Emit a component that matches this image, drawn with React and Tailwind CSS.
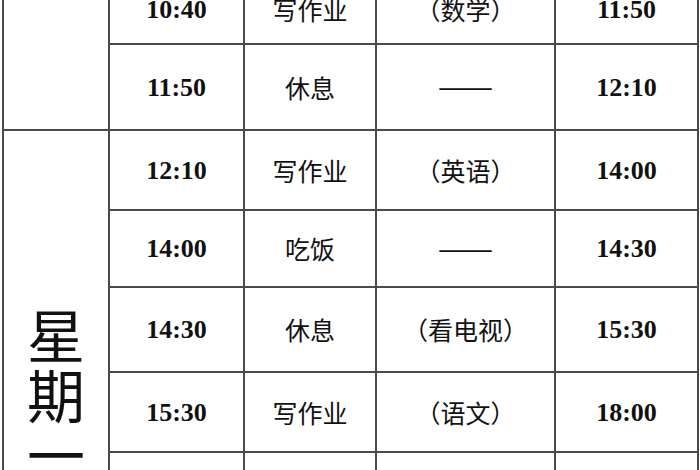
const rows = [
  { start: "10:40", task: "写作业", note: "（数学）", end: "11:50", h: "h-[70px]" },
  { start: "11:50", task: "休息", note: "——", end: "12:10", h: "h-[86px]" },
  { start: "12:10", task: "写作业", note: "（英语）", end: "14:00", h: "h-[80px]" },
  { start: "14:00", task: "吃饭", note: "——", end: "14:30", h: "h-[77px]" },
  { start: "14:30", task: "休息", note: "（看电视）", end: "15:30", h: "h-[85px]" },
  { start: "15:30", task: "写作业", note: "（语文）", end: "18:00", h: "h-[80px]" },
  { start: "18:00", task: "吃饭", note: "——", end: "18:30", h: "h-[80px]" },
];

const cell = "border-2 border-[#4a4a4a] text-center align-middle p-0";
const time = "font-['Liberation_Serif',serif] font-bold text-[26px] text-[#111]";
const cjk = "font-['Noto_Sans_CJK_SC',sans-serif] text-[25px] text-[#111] leading-none";
const dash = "font-['Liberation_Serif',serif] font-bold text-[26px] text-[#111] leading-none";

export default function App() {
  return (
    <div className="w-[700px] h-[470px] overflow-hidden bg-white">
      <table className="table-fixed border-collapse w-[695px] ml-[2px] -mt-[27px]">
        <colgroup>
          <col className="w-[106px]" />
          <col className="w-[135px]" />
          <col className="w-[132px]" />
          <col className="w-[179px]" />
          <col className="w-[143px]" />
        </colgroup>
        <tbody>
          {rows.map((r, i) => (
            <tr key={i} className={r.h}>
              {i === 0 && <td rowSpan={2} className={cell} />}
              {i === 2 && (
                <td rowSpan={5} className={`${cell} align-top`}>
                  <div className="flex flex-col items-center pt-[172px] font-['Noto_Sans_CJK_SC',sans-serif] text-[58px] leading-[60px] text-[#111]">
                    <span>星</span>
                    <span>期</span>
                    <span>一</span>
                  </div>
                </td>
              )}
              <td className={`${cell} ${time}`}>{r.start}</td>
              <td className={`${cell} ${cjk}`}>{r.task}</td>
              <td className={`${cell} ${r.note === "——" ? dash : cjk}`}>{r.note}</td>
              <td className={`${cell} ${time}`}>{r.end}</td>
            </tr>
          ))}
        </tbody>
      </table>
    </div>
  );
}
